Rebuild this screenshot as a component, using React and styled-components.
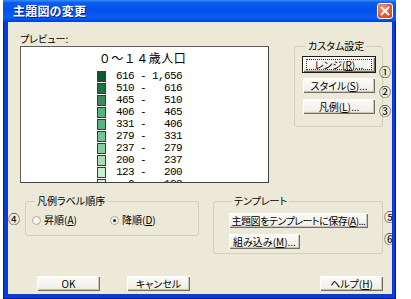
import React from "react";
import styled, { createGlobalStyle, css } from "styled-components";

const GlobalStyle = createGlobalStyle`
  html, body { margin: 0; padding: 0; background: #ffffff; }
  body { font-family: "Noto Sans CJK JP", "Liberation Sans", sans-serif; font-size: 11px; color: #000; }
`;

const UI_FONT = `"Noto Sans CJK JP", "Liberation Sans", sans-serif`;

const Window = styled.div`
  margin-left: 3px;
  width: 393px;
  height: 299px;
  box-sizing: border-box;
  display: flex;
  flex-direction: column;
  background: #0a3ad9;
  box-shadow: inset 1px 0 #0020a8, inset -1px 0 #001c98, inset 0 -1px #001c98;
  overflow: hidden;
`;

const TitleBar = styled.div`
  height: 22px;
  flex: none;
  display: flex;
  align-items: center;
  justify-content: space-between;
  padding: 0 3px 0 10px;
  background: linear-gradient(
    to bottom,
    #3d8cf6 0%,
    #0a5eef 12%,
    #0052e8 45%,
    #0a5cf2 80%,
    #0050e0 92%,
    #0040c8 100%
  );
`;

const Title = styled.span`
  color: #fff;
  font-family: ${UI_FONT};
  font-weight: 700;
  font-size: 12px;
  letter-spacing: 0.2px;
  line-height: 14px;
  text-shadow: 1px 1px 0 #0a1a90;
`;

const CloseButton = styled.div`
  width: 16px;
  height: 16px;
  box-sizing: border-box;
  border: 1px solid #fff;
  border-radius: 3px;
  background: radial-gradient(circle at 35% 30%, #f39a7c 0%, #e2643f 45%, #c8401c 100%);
  display: flex;
  align-items: center;
  justify-content: center;
`;

const Body = styled.div`
  position: relative;
  margin: 0 4px 5px 5px;
  height: 272px;
  background: #ece9d8;
  overflow: hidden;
  display: flex;
  flex-direction: column;
`;

const TopRow = styled.div`
  display: flex;
  align-items: flex-start;
  gap: 25px;
  padding: 10px 0 0 12px;
`;

const PreviewColumn = styled.div`
  width: 249px;
  display: flex;
  flex-direction: column;
`;

const SmallLabel = styled.div`
  font-size: 10px;
  line-height: 14px;
  height: 14px;
  font-feature-settings: "palt";
`;

const PreviewBox = styled.div`
  height: 137px;
  box-sizing: border-box;
  background: #fff;
  border: 1px solid #5e5e5e;
  border-right-color: #404040;
  border-bottom-color: #404040;
  padding-top: 4px;
  overflow: hidden;
`;

const MapTitle = styled.div`
  text-align: center;
  font-size: 12px;
  line-height: 14px;
  margin-bottom: 6px;
  padding-right: 4px;
  letter-spacing: 0.5px;
`;

const LegendList = styled.div`
  display: flex;
  flex-direction: column;
  padding-left: 76px;
`;

const LegendRow = styled.div`
  display: flex;
  align-items: flex-start;
  height: 12px;
  gap: 10px;
`;

const Swatch = styled.span`
  width: 9px;
  height: 11px;
  box-sizing: border-box;
  border: 1px solid #3a3a3a;
  background: ${(p) => p.$color};
`;

const RangeText = styled.span`
  font-family: "Liberation Mono", "DejaVu Sans Mono", monospace;
  font-size: 11px;
  line-height: 12px;
  letter-spacing: -0.6px;
  white-space: pre;
  margin-top: -1px;
`;

const GroupBox = styled.fieldset`
  margin: ${(p) => p.$mt || 0}px 0 0 0;
  width: ${(p) => p.$w}px;
  box-sizing: border-box;
  border: 1px solid #d0d0bf;
  border-radius: 3px;
  padding: ${(p) => p.$pad};
  min-width: 0;
`;

const Legend = styled.legend`
  padding: 0 2px;
  margin-left: 3px;
  font-size: 10px;
  line-height: 12px;
  font-feature-settings: "palt";
`;

const Stack = styled.div`
  display: flex;
  flex-direction: column;
  align-items: flex-start;
  gap: ${(p) => p.$gap}px;
`;

const PushButton = styled.button`
  position: relative;
  width: ${(p) => p.$w}px;
  height: 15px;
  padding: 0;
  margin: 0;
  box-sizing: border-box;
  font-family: ${UI_FONT};
  font-size: 10px;
  line-height: 13px;
  font-feature-settings: "palt";
  letter-spacing: ${(p) => p.$ls || 0}px;
  white-space: nowrap;
  color: #000;
  background: linear-gradient(to bottom, #fbfbf8 0%, #f3f2ec 70%, #e9e7dc 100%);
  border: none;
  box-shadow: inset 1px 1px #ffffff, inset -1px -1px #716f64, inset -2px -2px #c8c5b6;
  display: flex;
  align-items: center;
  justify-content: center;
  ${(p) =>
    p.$default &&
    css`
      box-shadow: 0 0 0 1px #1b1b1b, inset 1px 1px #ffffff, inset -1px -1px #716f64,
        inset -2px -2px #c8c5b6;
      &::after {
        content: "";
        position: absolute;
        inset: 2px 3px 2px 3px;
        border: 1px dotted #333;
      }
    `}
  u { text-decoration: underline; text-underline-offset: 1px; }
`;

const Caption = styled.span`
  white-space: nowrap;
`;

const MiddleRow = styled.div`
  display: flex;
  align-items: flex-start;
  gap: 14px;
  margin-top: 12px;
  padding-left: 17px;
`;

const RadioRow = styled.div`
  display: flex;
  align-items: center;
  height: 12px;
`;

const RadioOption = styled.label`
  display: flex;
  align-items: center;
  gap: 3px;
  width: ${(p) => p.$w}px;
  font-size: 10px;
  line-height: 12px;
  font-feature-settings: "palt";
  u { text-decoration: underline; }
`;

const RadioDot = styled.span`
  width: 9px;
  height: 9px;
  box-sizing: border-box;
  border-radius: 50%;
  border: 1px solid #b0ae9f;
  background: radial-gradient(circle at 40% 35%, #fff 0%, #f4f3ee 60%, #dcdad0 100%);
  display: flex;
  align-items: center;
  justify-content: center;
  &::after {
    content: "";
    width: 3px;
    height: 3px;
    border-radius: 50%;
    background: ${(p) => (p.$checked ? "#1a1a1a" : "transparent")};
  }
`;

const ButtonRow = styled.div`
  display: flex;
  align-items: center;
  gap: 27px;
  margin-top: 22px;
  padding-left: 29px;
`;

const Spacer = styled.span`
  width: 76px;
`;

const Marker = styled.span`
  position: absolute;
  left: ${(p) => p.$x}px;
  top: ${(p) => p.$y}px;
  font-family: "Noto Sans CJK JP", "DejaVu Sans", sans-serif;
  font-size: 12px;
  line-height: 12px;
`;

const rows = [
  ["616", "1,656", "#0a5a2c"],
  ["510", "616", "#1c7443"],
  ["465", "510", "#3b8b5d"],
  ["406", "465", "#4fb778"],
  ["331", "406", "#55b67c"],
  ["279", "331", "#70c690"],
  ["237", "279", "#82cf9b"],
  ["200", "237", "#a6dfb3"],
  ["123", "200", "#c9f1c8"],
  ["0", "123", "#dbf7d4"],
];

const markers = [
  ["①", 371, 44],
  ["②", 371, 64],
  ["③", 371, 83],
  ["④", 0, 191],
  ["⑤", 376, 189],
  ["⑥", 376, 211],
];

export default function App() {
  return (
    <>
      <GlobalStyle />
      <Window>
        <TitleBar>
          <Title>主題図の変更</Title>
          <CloseButton>
            <svg width="10" height="10" viewBox="0 0 10 10">
              <path d="M1.5 1.5 L8.5 8.5 M8.5 1.5 L1.5 8.5" stroke="#fff" strokeWidth="1.8" strokeLinecap="square" />
            </svg>
          </CloseButton>
        </TitleBar>
        <Body>
          <TopRow>
            <PreviewColumn>
              <SmallLabel>プレビュー:</SmallLabel>
              <PreviewBox>
                <MapTitle>０～１４歳人口</MapTitle>
                <LegendList>
                  {rows.map(([a, b, c]) => (
                    <LegendRow key={a}>
                      <Swatch $color={c} />
                      <RangeText>{`${a.padStart(3)} - ${b.padStart(5)}`}</RangeText>
                    </LegendRow>
                  ))}
                </LegendList>
              </PreviewBox>
            </PreviewColumn>
            <GroupBox $w={89} $mt={8} $pad="5px 7px 12px 8px">
              <Legend>カスタム設定</Legend>
              <Stack $gap={6}>
                <PushButton $w={72} $default>
                  <Caption>レンジ(<u>R</u>)...</Caption>
                </PushButton>
                <PushButton $w={72}>
                  <Caption>スタイル(<u>S</u>)...</Caption>
                </PushButton>
                <PushButton $w={72}>
                  <Caption>凡例(<u>L</u>)...</Caption>
                </PushButton>
              </Stack>
            </GroupBox>
          </TopRow>
          <MiddleRow>
            <GroupBox $w={174} $pad="7px 6px 9px 6px">
              <Legend>凡例ラベル順序</Legend>
              <RadioRow>
                <RadioOption $w={78}>
                  <RadioDot />
                  <Caption>昇順(<u>A</u>)</Caption>
                </RadioOption>
                <RadioOption $w={70}>
                  <RadioDot $checked />
                  <Caption>降順(<u>D</u>)</Caption>
                </RadioOption>
              </RadioRow>
            </GroupBox>
            <GroupBox $w={170} $pad="6px 6px 4px 15px">
              <Legend>テンプレート</Legend>
              <Stack $gap={6}>
                <PushButton $w={139} $ls={-0.5}>
                  <Caption>主題図をテンプレートに保存(<u>A</u>)...</Caption>
                </PushButton>
                <PushButton $w={71}>
                  <Caption>組み込み(<u>M</u>)...</Caption>
                </PushButton>
              </Stack>
            </GroupBox>
          </MiddleRow>
          <ButtonRow>
            <PushButton $w={63}>
              <Caption>OK</Caption>
            </PushButton>
            <PushButton $w={63}>
              <Caption>キャンセル</Caption>
            </PushButton>
            <Spacer />
            <PushButton $w={63}>
              <Caption>ヘルプ(<u>H</u>)</Caption>
            </PushButton>
          </ButtonRow>
          {markers.map(([m, x, y]) => (
            <Marker key={m} $x={x} $y={y}>
              {m}
            </Marker>
          ))}
        </Body>
      </Window>
    </>
  );
}
